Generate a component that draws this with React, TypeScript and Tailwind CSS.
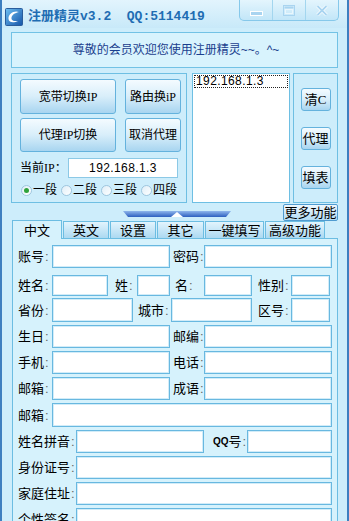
import type { ReactNode } from 'react';

const sans = "[font-family:'Liberation_Sans','Noto_Sans_CJK_SC',sans-serif]";
const song = "[font-family:'Liberation_Serif','Noto_Sans_CJK_SC',serif]";

function Btn({ children, className = '' }: { children: ReactNode; className?: string }) {
  return (
    <div
      className={`flex items-center justify-center rounded-[3px] border border-[#64b2dd] bg-linear-to-b from-[#f4fbff] via-[#d8eefa] to-[#a8d5f0] text-[12px] leading-none text-black ${song} ${className}`}
    >
      {children}
    </div>
  );
}

function Label({ text, w, ml = 0 }: { text: ReactNode; w: number; ml?: number }) {
  return (
    <div className="flex shrink-0 items-center whitespace-nowrap text-[13px] leading-none" style={{ width: w, marginLeft: ml }}>
      {text}
      <span className="ml-[1px] text-[#666]">:</span>
    </div>
  );
}

function Input({ w }: { w: number }) {
  return (
    <div
      className="h-full shrink-0 border border-[#68b8e0] bg-white shadow-[inset_0_0_0_1px_#d2ecf8]"
      style={{ width: w }}
    />
  );
}

function Radio({ label, on = false }: { label: string; on?: boolean }) {
  return (
    <div className="flex items-center">
      <div className="flex h-[11px] w-[11px] items-center justify-center rounded-full border border-[#9ec6de] bg-linear-to-br from-[#dfeef7] to-white">
        {on && <div className="h-[5px] w-[5px] rounded-full bg-[#2fa33c]" />}
      </div>
      <span className={`ml-[1px] w-[24px] text-[12px] leading-none ${song}`}>{label}</span>
    </div>
  );
}

function TitleBar() {
  return (
    <div className="flex h-[28px] shrink-0 items-start bg-linear-to-b from-[#e2f4fd] to-[#c8e9f9]">
      <svg width="18" height="18" viewBox="0 0 18 18" className="ml-[3px] mt-[8px]">
        <defs>
          <linearGradient id="ic" x1="0" y1="0" x2="1" y2="1">
            <stop offset="0" stopColor="#6fc0f2" />
            <stop offset="1" stopColor="#1554a8" />
          </linearGradient>
        </defs>
        <rect x="0.5" y="0.5" width="17" height="17" rx="1" fill="url(#ic)" stroke="#2a5d9c" />
        <path d="M14 4 C9 2 3 6 3.5 11 C4 15 9 15 13 13 C9 13.5 6 12.5 6.5 9.5 C7 6.5 11 4.5 14 4 Z" fill="#fff" />
      </svg>
      <div className="ml-[5px] mt-[8px] text-[13px] font-bold leading-[18px] whitespace-pre text-[#1f6db3] [font-family:'Liberation_Mono','Noto_Sans_CJK_SC',monospace]">
        注册精灵v3.2  QQ:5114419
      </div>
      <div className="ml-auto mr-[8px] flex h-[21px] w-[100px] overflow-hidden rounded-b-[5px] border border-t-0 border-[#86c8ea] bg-linear-to-b from-[#e4f5fd] to-[#c2e6f8]">
        <div className="flex flex-1 items-end justify-center pb-[4px]">
          <svg width="13" height="5" viewBox="0 0 13 5">
            <rect x="0.5" y="0.5" width="12" height="4" fill="#a9d4f0" stroke="#fff" />
          </svg>
        </div>
        <div className="flex flex-1 items-center justify-center border-x border-[#a3d6ef]">
          <svg width="12" height="11" viewBox="0 0 12 11">
            <rect x="0.5" y="0.5" width="11" height="10" fill="none" stroke="#a9d4f0" strokeWidth="1" />
            <rect x="1.5" y="1.5" width="9" height="2" fill="#a9d4f0" />
            <rect x="2.5" y="4.5" width="7" height="4" fill="none" stroke="#e9f6fd" />
          </svg>
        </div>
        <div className="flex flex-1 items-center justify-center">
          <svg width="12" height="11" viewBox="0 0 12 11">
            <path d="M1.5 1 L10.5 10 M10.5 1 L1.5 10" stroke="#fff" strokeWidth="3.2" />
            <path d="M1.5 1 L10.5 10 M10.5 1 L1.5 10" stroke="#a9d4f0" strokeWidth="1.8" />
          </svg>
        </div>
      </div>
    </div>
  );
}

const tabs = [
  { t: '英文', w: 46 },
  { t: '设置', w: 46 },
  { t: '其它', w: 47 },
  { t: '一键填写', w: 59 },
  { t: '高级功能', w: 60 },
];

export default function App() {
  return (
    <div className={`flex h-[521px] w-[349px] flex-col overflow-hidden border-x-2 border-[#3d7fc0] bg-[#cdedfb] text-black ${sans}`}>
      <TitleBar />
      <div className="flex flex-col px-[9px]">
        {/* banner */}
        <div className="mt-[4px] flex h-[36px] items-center justify-center border border-[#72c2e5] bg-[#d8f3fd] pl-[3px] text-[12px] text-[#1b3f8e]">
          尊敬的会员欢迎您使用注册精灵~~。^~
        </div>

        {/* middle */}
        <div className="mt-[5px] flex h-[130px]">
          <div className="flex w-[176px] shrink-0 flex-col border border-[#6ebfe3] pl-[8px] pt-[5px]">
            <div className="flex gap-[9px]">
              <Btn className="h-[35px] w-[96px]">宽带切换IP</Btn>
              <Btn className="h-[35px] w-[56px]">路由换iP</Btn>
            </div>
            <div className="mt-[4px] flex gap-[9px]">
              <Btn className="h-[34px] w-[96px]">代理IP切换</Btn>
              <Btn className="h-[34px] w-[56px]">取消代理</Btn>
            </div>
            <div className="mt-[6px] flex h-[20px] items-center">
              <span className={`w-[48px] text-[12px] leading-none ${song}`}>当前IP：</span>
              <div className="flex h-full w-[110px] items-center justify-center border border-[#8cc9e6] bg-white text-[12px] tracking-[0.4px]">
                192.168.1.3
              </div>
            </div>
            <div className="mt-[6px] flex gap-[4px] pl-[1px]">
              <Radio label="一段" on />
              <Radio label="二段" />
              <Radio label="三段" />
              <Radio label="四段" />
            </div>
          </div>

          <div className="ml-[5px] w-[98px] shrink-0 border border-[#6ebfe3] bg-white p-[1px]">
            <div className="h-[13px] border border-dotted border-[#222] pl-[1px] text-[12px] leading-[11px] tracking-[0.4px]">
              192.168.1.3
            </div>
          </div>

          <div className="ml-[3px] flex w-[45px] shrink-0 flex-col items-center gap-[16px] border border-[#6ebfe3] pt-[14px]">
            <Btn className="h-[23px] w-[30px] text-[13px]">清C</Btn>
            <Btn className="h-[23px] w-[30px] text-[13px]">代理</Btn>
            <Btn className="h-[23px] w-[30px] text-[13px]">填表</Btn>
          </div>
        </div>

        {/* slider + more */}
        <div className="flex h-[18px] items-start">
          <svg width="108" height="6" viewBox="0 0 108 6" className="ml-[112px] mt-[8px]">
            <defs>
              <linearGradient id="sl" x1="0" y1="0" x2="0" y2="1">
                <stop offset="0" stopColor="#8fb6ec" />
                <stop offset="1" stopColor="#2d5fc0" />
              </linearGradient>
            </defs>
            <polygon points="0,0 108,0 103,6 5,6" fill="url(#sl)" />
            <polygon points="48,6 54,1 60,6" fill="#fff" />
          </svg>
          <div className="ml-auto mt-[1px] flex h-[17px] w-[55px] items-center justify-center rounded-[2px] border border-[#4f9bd0] bg-linear-to-b from-[#eef8fe] to-[#b2dbf3] text-[13px] leading-none">
            更多功能
          </div>
        </div>

        {/* tabs */}
        <div className="flex h-[17px] items-end gap-[1px] pl-[1px]">
          <div className="relative z-10 -mb-[1px] flex h-[19px] w-[50px] items-center justify-center border border-b-0 border-[#6cbde2] bg-[#d6f2fc] text-[13px] leading-none">
            中文
          </div>
          {tabs.map(tb => (
            <div
              key={tb.t}
              className="flex h-[17px] items-center justify-center border border-b-0 border-[#6cbde2] bg-linear-to-b from-[#e2f4fd] to-[#acd9f1] text-[13px] leading-none"
              style={{ width: tb.w }}
            >
              {tb.t}
            </div>
          ))}
        </div>

        {/* tab panel */}
        <div className="ml-[1px] flex h-[300px] w-[326px] flex-col border border-[#6cbde2] bg-[#d6f2fc] pl-[5px] pt-[6px]">
          <div className="flex h-[23px]">
            <Label text="账号" w={34} />
            <Input w={118} />
            <Label text="密码" w={31} ml={3} />
            <Input w={128} />
          </div>
          <div className="mt-[7px] flex h-[21px]">
            <Label text="姓名" w={34} />
            <Input w={56} />
            <Label text="姓" w={22} ml={7} />
            <Input w={33} />
            <Label text="名" w={29} ml={5} />
            <Input w={48} />
            <Label text="性别" w={33} ml={6} />
            <Input w={39} />
          </div>
          <div className="mt-[2px] flex h-[24px]">
            <Label text="省份" w={34} />
            <Input w={81} />
            <Label text="城市" w={33} ml={5} />
            <Input w={81} />
            <Label text="区号" w={33} ml={6} />
            <Input w={39} />
          </div>
          {[
            ['生日', '邮编'],
            ['手机', '电话'],
            ['邮箱', '成语'],
          ].map(([a, b]) => (
            <div key={a + b} className="mt-[3px] flex h-[23px]">
              <Label text={a} w={34} />
              <Input w={118} />
              <Label text={b} w={31} ml={3} />
              <Input w={128} />
            </div>
          ))}
          <div className="mt-[3px] flex h-[24px]">
            <Label text="邮箱" w={34} />
            <Input w={280} />
          </div>
          <div className="mt-[3px] flex h-[23px]">
            <Label text="姓名拼音" w={58} />
            <Input w={128} />
            <Label
              text={
                <>
                  <span className="text-[10px] font-bold">QQ</span>号
                </>
              }
              w={34}
              ml={9}
            />
            <Input w={85} />
          </div>
          {['身份证号', '家庭住址', '个性签名'].map(l => (
            <div key={l} className="mt-[3px] flex h-[23px]">
              <Label text={l} w={58} />
              <Input w={256} />
            </div>
          ))}
        </div>
      </div>
    </div>
  );
}
